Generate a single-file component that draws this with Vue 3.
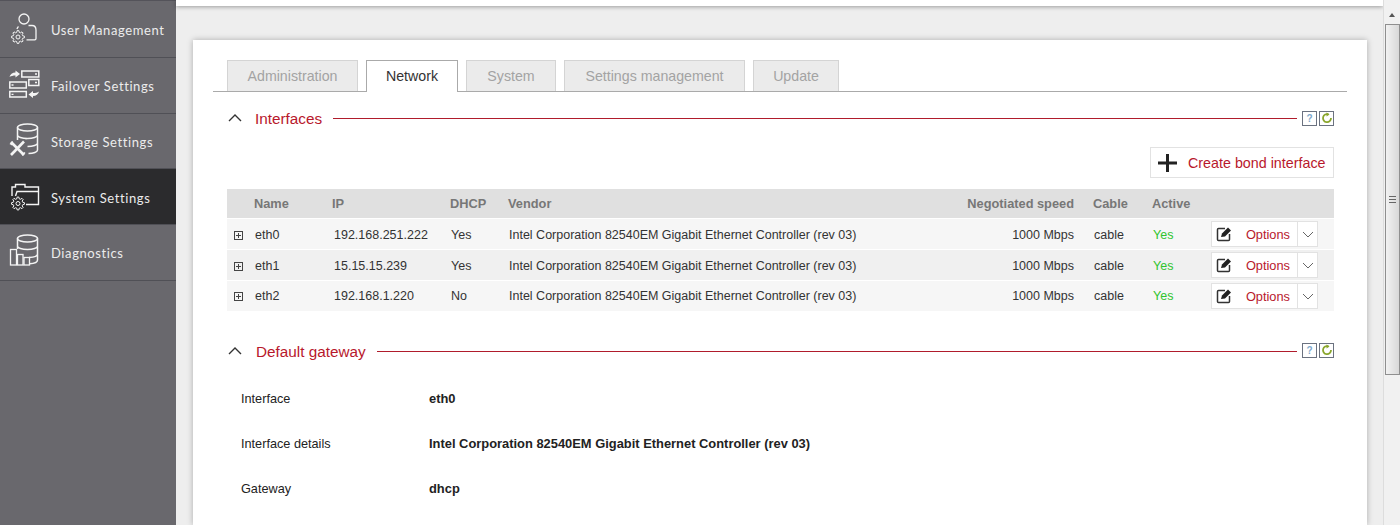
<script setup>
const nav = [
  { key: 'user', label: 'User Management' },
  { key: 'failover', label: 'Failover Settings' },
  { key: 'storage', label: 'Storage Settings' },
  { key: 'system', label: 'System Settings', active: true },
  { key: 'diag', label: 'Diagnostics' }
]
const tabs = [
  { label: 'Administration', w: 131 },
  { label: 'Network', w: 92, active: true },
  { label: 'System', w: 90 },
  { label: 'Settings management', w: 181 },
  { label: 'Update', w: 86 }
]
const vendor = 'Intel Corporation 82540EM Gigabit Ethernet Controller (rev 03)'
const rows = [
  { name: 'eth0', ip: '192.168.251.222', dhcp: 'Yes' },
  { name: 'eth1', ip: '15.15.15.239', dhcp: 'Yes' },
  { name: 'eth2', ip: '192.168.1.220', dhcp: 'No' }
]
const details = [
  { k: 'Interface', v: 'eth0' },
  { k: 'Interface details', v: vendor },
  { k: 'Gateway', v: 'dhcp' }
]
function gear(cx, cy, ro, ri, n) {
  const pts = []
  const step = (Math.PI * 2) / n
  for (let i = 0; i < n; i++) {
    const a = i * step
    const o = [a - step * 0.16, a + step * 0.16]
    const r = [a + step * 0.34, a + step * 0.66]
    o.forEach((t) => pts.push([cx + ro * Math.cos(t), cy + ro * Math.sin(t)]))
    r.forEach((t) => pts.push([cx + ri * Math.cos(t), cy + ri * Math.sin(t)]))
  }
  return 'M' + pts.map((p) => p[0].toFixed(2) + ' ' + p[1].toFixed(2)).join('L') + 'Z'
}
const gearUser = gear(18, 36, 6.5, 4.8, 8)
const gearSys = gear(18, 34.5, 6.5, 4.8, 8)
</script>

<template>
  <div class="page">
    <aside class="sidebar">
      <div v-for="n in nav" :key="n.key" class="nav-item" :class="{ active: n.active }">
        <svg class="nav-icon" viewBox="0 0 40 56" width="40" height="56" fill="none" stroke="#f4f4f4" stroke-width="1.300">
          <g v-if="n.key === 'user'">
            <circle cx="24" cy="18" r="5" />
            <path d="M18.500 25.500c-.8.800-1.300 1.500-1.500 2.500M28.500 24.500h3.500c2.500 0 4 2 4 4.500v8.500c0 .8-.5 1.300-1.300 1.300H26.500" />
            <path :d="gearUser" stroke-width="1" />
            <circle cx="18" cy="36" r="2" stroke-width="1" />
          </g>
          <g v-else-if="n.key === 'failover'">
            <rect x="21.800" y="14" width="17" height="6" stroke-width="1.500" />
            <rect x="9.800" y="25" width="16.500" height="6" stroke-width="1.500" />
            <rect x="28.800" y="22.500" width="10" height="6" stroke-width="1.500" />
            <rect x="9.800" y="34.500" width="16.500" height="5.500" stroke-width="1.500" />
            <path d="M35 17h2M11.500 28h2M35 25.500h2M11.500 37.300h2" />
            <path d="M9.500 20c.5-2.500 3-4.500 6-4.500v-2l4.500 3.500-4.500 3.500v-2c-2.500 0-4.500.5-6 1.500z" fill="#f4f4f4" stroke="none" />
            <path d="M39 34.500c-.5 2.500-3 4.500-6 4.500v2l-4.500-3.500L33 34v2c2.500 0 4.500-.5 6-1.500z" fill="#f4f4f4" stroke="none" />
          </g>
          <g v-else-if="n.key === 'storage'">
            <ellipse cx="27.500" cy="14.500" rx="10" ry="3.500" stroke-width="1.500" />
            <path d="M17.500 14.500V27M37.500 14.500V37c0 2-4 3.500-9 3.500M37.500 22c0 2-4.500 3.500-10 3.500S17.500 24 17.500 22M37.500 30c0 2-4.500 3.500-10 3.500M26 25.500v1" stroke-width="1.500" />
            <path d="M11 29l13 13" stroke-width="2.600" />
            <path d="M24 28.500L11 42" stroke-width="2.600" />
            <path d="M9.500 31l3-3 1 3-1.500 1.500zM22.500 43l3-3-1-1-3 2z" fill="#f4f4f4" stroke="none" />
          </g>
          <g v-else-if="n.key === 'system'">
            <path d="M12 27v-9h3.500v-2.500H25V18h13.500v17.500H26" stroke-width="1.400" />
            <path d="M15.500 27l1.500-4.500h21.500" stroke-width="1.400" />
            <path :d="gearSys" stroke-width="1" />
            <circle cx="18" cy="34.500" r="2" stroke-width="1" />
          </g>
          <g v-else>
            <ellipse cx="27.500" cy="14.500" rx="10" ry="3.500" stroke-width="1.500" />
            <path d="M17.500 14.500V25M37.500 14.500V36c0 2-3 3.500-8 3.800M37.500 22c0 2-4.500 3.500-10 3.500S17.500 24 17.500 22M37.500 30c0 2-4 3.300-8.500 3.500" stroke-width="1.500" />
            <rect x="10.500" y="25.500" width="6" height="15.500" />
            <rect x="17.500" y="30.500" width="5.500" height="10.500" />
            <rect x="24" y="33.500" width="5.500" height="7.500" />
          </g>
        </svg>
        <span class="nav-label">{{ n.label }}</span>
      </div>
    </aside>

    <main class="main">
      <div class="topbar"></div>
      <section class="card">
        <div class="tabs">
          <div v-for="t in tabs" :key="t.label" class="tab" :class="{ active: t.active }" :style="{ width: t.w + 'px' }">{{ t.label }}</div>
        </div>

        <div class="section-head first">
          <svg class="chev" viewBox="0 0 14 8" width="14" height="8" fill="none" stroke="#333" stroke-width="1.400"><path d="M1 7l6-6 6 6" /></svg>
          <h2 class="section-title">Interfaces</h2>
          <span class="rule"></span>
          <span class="mini help">?</span>
          <span class="mini refresh">
            <svg viewBox="0 0 12 12" width="12" height="12" fill="none" stroke="#8aa62c" stroke-width="1.800"><path d="M7.500 2.400A4 4 0 1 0 10 6" /><path d="M5.500 .5l3 2-3 2z" fill="#8aa62c" stroke="none" /></svg>
          </span>
        </div>

        <div class="actions">
          <button class="create">
            <svg viewBox="0 0 19 18" width="19" height="18" fill="none" stroke="#222" stroke-width="3"><path d="M9.500 0v18M0 9h19" /></svg>
            <span>Create bond interface</span>
          </button>
        </div>

        <table class="grid">
          <colgroup>
            <col style="width:27px" /><col style="width:78px" /><col style="width:118px" /><col style="width:58px" />
            <col style="width:458px" /><col style="width:108px" /><col style="width:19px" /><col style="width:59px" /><col style="width:59px" /><col />
          </colgroup>
          <thead>
            <tr>
              <th></th><th>Name</th><th>IP</th><th>DHCP</th><th>Vendor</th>
              <th class="right">Negotiated speed</th><th></th><th>Cable</th><th>Active</th><th></th>
            </tr>
          </thead>
          <tbody>
            <tr v-for="r in rows" :key="r.name">
              <td class="exp-cell"><span class="expander"></span></td>
              <td>{{ r.name }}</td>
              <td class="ip">{{ r.ip }}</td>
              <td>{{ r.dhcp }}</td>
              <td>{{ vendor }}</td>
              <td class="right">1000 Mbps</td>
              <td></td>
              <td>cable</td>
              <td class="yes">Yes</td>
              <td class="opt-cell">
                <div class="options">
                  <span class="opt-main">
                    <svg viewBox="0 0 16 16" width="16" height="16" fill="none">
                      <path d="M9 2.500H2.500a1 1 0 0 0-1 1v10a1 1 0 0 0 1 1h10a1 1 0 0 0 1-1V8" stroke="#333" stroke-width="1.500" />
                      <path d="M5 11l1-3.500L12 1.500 15 4.500 9 10.500z" fill="#222" />
                    </svg>
                    <span class="opt-text">Options</span>
                  </span>
                  <span class="opt-arrow">
                    <svg viewBox="0 0 12 7" width="12" height="7" fill="none" stroke="#666" stroke-width="1"><path d="M1 1l5 5 5-5" /></svg>
                  </span>
                </div>
              </td>
            </tr>
          </tbody>
        </table>

        <div class="section-head second">
          <svg class="chev" viewBox="0 0 14 8" width="14" height="8" fill="none" stroke="#333" stroke-width="1.400"><path d="M1 7l6-6 6 6" /></svg>
          <h2 class="section-title">Default gateway</h2>
          <span class="rule"></span>
          <span class="mini help">?</span>
          <span class="mini refresh">
            <svg viewBox="0 0 12 12" width="12" height="12" fill="none" stroke="#8aa62c" stroke-width="1.800"><path d="M7.500 2.400A4 4 0 1 0 10 6" /><path d="M5.500 .5l3 2-3 2z" fill="#8aa62c" stroke="none" /></svg>
          </span>
        </div>

        <dl class="details">
          <div v-for="d in details" :key="d.k" class="detail">
            <dt>{{ d.k }}</dt>
            <dd>{{ d.v }}</dd>
          </div>
        </dl>
      </section>
    </main>

    <div class="scrollbar">
      <span class="arrow"></span>
      <div class="thumb"><span class="grip"></span></div>
    </div>
  </div>
</template>

<style>
html, body { margin: 0; height: 100%; overflow: hidden; }
</style>

<style scoped>
.page { display: flex; width: 1400px; height: 525px; overflow: hidden; font-family: "Liberation Sans", Arial, sans-serif; background: #eeeeee; }
.sidebar { width: 176px; flex: none; background: #69686d; padding-top: 1px; border-top: 1px solid #54535a; box-sizing: border-box; }
.nav-item { display: flex; align-items: center; height: 55.75px; box-sizing: border-box; border-bottom: 1px solid #505056; color: #ececec; }
.nav-item.active { background: #2b2b2d; }
.nav-icon { flex: none; }
.nav-label { margin: 2px 0 0 11px; font-family: Lato, "Open Sans", sans-serif; font-size: 13px; letter-spacing: .6px; }
.main { flex: 1; min-width: 0; display: flex; flex-direction: column; padding: 0 16px 0 17px; }
.topbar { height: 6px; margin: 0 -16px 34px -17px; background: #fff; box-shadow: 0 1px 4px rgba(0,0,0,.35); flex: none; }
.card { background: #fff; box-shadow: 0 0 6px rgba(0,0,0,.28); padding: 20px 33px 0 34px; flex: 1; }
.tabs { display: flex; gap: 8px; height: 31px; margin: 0 -13px 0 -14px; padding-left: 14px; border-bottom: 1px solid #aaa; }
.tab { height: 31px; box-sizing: border-box; border: 1px solid #d4d4d4; border-bottom: 0; background: #ebebeb; color: #a3a3a3; font-size: 14.200px; line-height: 30px; text-align: center; white-space: nowrap; overflow: hidden; }
.tab.active { height: 32px; background: #fff; border-color: #aaa; color: #333; }
.section-head { display: flex; align-items: center; height: 20px; }
.section-head.first { margin-top: 16px; }
.section-head.second { margin-top: 30px; }
.chev { margin-left: 1px; flex: none; }
.section-title { margin: 0 11px 0 13px; padding-top: 2px; font-size: 15.300px; font-weight: 400; color: #b8182c; white-space: nowrap; }
.second .section-title { margin-left: 14px; }
.second .mini { margin-bottom: 2px; }
.rule { flex: 1; height: 1px; background: #b01c2c; margin-right: 5px; }
.mini { width: 15px; height: 15px; box-sizing: border-box; border: 1px solid #6b7280; display: flex; align-items: center; justify-content: center; flex: none; }
.help { color: #7fa9cc; font-size: 10px; font-weight: 700; }
.refresh { margin-left: 2px; }
.actions { display: flex; justify-content: flex-end; margin-top: 19px; }
.create { display: flex; align-items: center; gap: 11px; width: 184px; height: 31px; box-sizing: border-box; padding: 0 0 0 7px; border: 1px solid #e2e2e2; background: #fff; color: #b8182c; font: 14.300px "Liberation Sans", Arial, sans-serif; white-space: nowrap; }
.grid { width: 1107px; margin-top: 11px; border-collapse: separate; border-spacing: 0; table-layout: fixed; font-size: 12px; color: #333; }
.grid th { height: 29px; padding: 0; background: #e0e0e0; color: #777; font-size: 12.800px; font-weight: 700; text-align: left; }
.grid td { height: 30px; padding: 0 0 0 1px; background: #f6f6f6; border-top: 1px solid #fff; white-space: nowrap; font-size: 12.500px; }
.grid tbody tr:not(:last-child) td:not(.opt-cell) { height: 28px; padding-top: 2px; }
.grid tbody tr:nth-child(2) td { background: #f0f0f0; }
.grid .right { text-align: right; }
.grid .ip { padding-left: 2px; }
.expander { display: block; width: 9px; height: 9px; margin-left: 6px; border: 1px solid #444; box-sizing: border-box; background: linear-gradient(#444,#444) center/5px 1px no-repeat, linear-gradient(#444,#444) center/1px 5px no-repeat; }
.yes { color: #2fc42f; }
.opt-cell { padding-left: 0 !important; }
.options { display: flex; width: 107px; height: 26px; box-sizing: border-box; border: 1px solid #e2e2e2; background: #fff; }
.opt-main { flex: 1; display: flex; align-items: center; justify-content: space-between; padding: 0 7px 0 4px; border-right: 1px solid #e2e2e2; }
.opt-text { color: #b8182c; font-size: 12.800px; }
.opt-arrow { width: 19px; display: flex; align-items: center; justify-content: center; }
.details { margin: 0; }
.detail { display: flex; height: 45px; align-items: center; margin: 0; color: #222; }
.detail:first-child { margin-top: 15px; }
.detail dt { width: 188px; padding-left: 14px; flex: none; font-size: 12.700px; }
.detail dd { margin: 0; font-weight: 700; font-size: 12.900px; }
.scrollbar { width: 17px; flex: none; background: #f1f1f1; border-left: 1px solid #ddd; box-sizing: border-box; display: flex; flex-direction: column; align-items: center; }
.arrow { margin-top: 13px; width: 0; height: 0; border-left: 3.500px solid transparent; border-right: 3.500px solid transparent; border-bottom: 4px solid #555; }
.thumb { margin-top: 7px; width: 15px; height: 351px; box-sizing: border-box; border: 1px solid #8f8f8f; background: linear-gradient(90deg,#f2f2f2,#d8d8d8); display: flex; align-items: center; justify-content: center; }
.grip { width: 7px; height: 5px; border-top: 1px solid #666; border-bottom: 1px solid #666; background: linear-gradient(#666,#666) center/100% 1px no-repeat; }
</style>
